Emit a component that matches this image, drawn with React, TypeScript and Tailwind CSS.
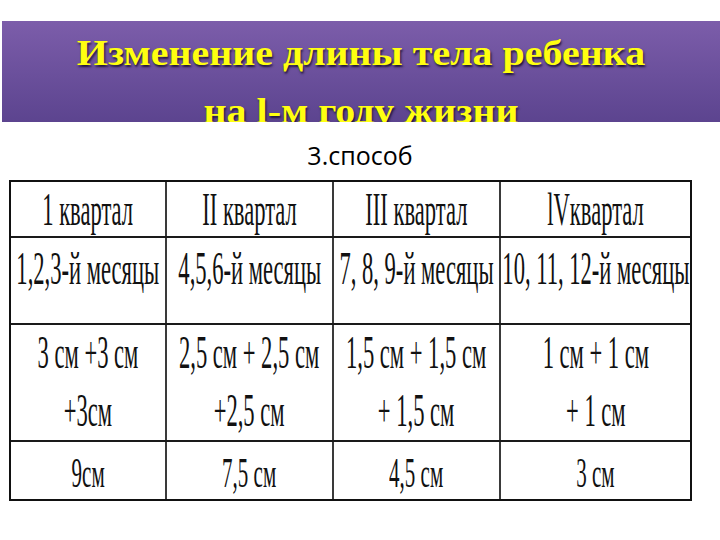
import React from "react";

const serif = "[font-family:'Liberation_Serif','DejaVu_Serif',serif]";

const rows: { h: string; pad: string; size: string; sx: string; cells: string[][] }[] = [
  {
    h: "h-[56px]",
    pad: "",
    size: "text-[47px] leading-[48px]",
    sx: "scale-x-[0.48]",
    cells: [["1 квартал"], ["II квартал"], ["III квартал"], ["lVквартал"]],
  },
  {
    h: "h-[87px]",
    pad: "pb-[25px]",
    size: "text-[47px] leading-[48px]",
    sx: "scale-x-[0.48]",
    cells: [["1,2,3-й месяцы"], ["4,5,6-й месяцы"], ["7, 8, 9-й месяцы"], ["10, 11, 12-й месяцы"]],
  },
  {
    h: "h-[117px]",
    pad: "pb-[3px]",
    size: "text-[47px] leading-[58px]",
    sx: "scale-x-[0.48]",
    cells: [
      ["3 см +3 см", "+3см"],
      ["2,5 см + 2,5 см", "+2,5 см"],
      ["1,5 см + 1,5 см", "+ 1,5 см"],
      ["1 см + 1 см", "+ 1 см"],
    ],
  },
  {
    h: "h-[57px]",
    pad: "pt-[4px]",
    size: "text-[42px] leading-[44px]",
    sx: "scale-x-[0.5]",
    cells: [["9см"], ["7,5 см"], ["4,5 см"], ["3 см"]],
  },
];

const colW = ["w-[156px]", "w-[167px]", "w-[167px]", "w-[189px]"];

const App = () => {
  return (
    <div className="w-[720px] h-[540px] bg-white overflow-hidden">
      <div className="h-[21px]" />

      {/* Title band */}
      <div className="ml-[2px] h-[101px] overflow-hidden bg-gradient-to-b from-[#7c5daa] to-[#5c448f] text-center">
        <h1
          className={`${serif} pt-[3px] text-[36px] leading-[58px] font-bold text-[#ffff10] whitespace-nowrap scale-x-[1.11] [text-shadow:1px_2px_2px_rgba(20,10,40,0.85)]`}
        >
          Изменение длины тела ребенка
          <br />
          на l-м году жизни
        </h1>
      </div>

      <p className="mt-[16px] h-[34px] text-center text-[25px] leading-[34px] text-black [font-family:'Open_Sans','Noto_Sans',sans-serif]">
        3.способ
      </p>

      {/* Table */}
      <div className={`${serif} mt-[8px] ml-[9px] w-[683px] border-2 border-[#111] text-[#111]`}>
        {rows.map((row, ri) => (
          <div
            key={ri}
            className={`flex ${row.h} ${ri < rows.length - 1 ? "border-b-2 border-[#1a1a1a]" : ""}`}
          >
            {row.cells.map((lines, ci) => (
              <div
                key={ci}
                className={`${colW[ci]} ${row.pad} flex items-center justify-center overflow-visible ${
                  ci < 3 ? "border-r-2 border-[#3a3a3a]" : ""
                }`}
              >
                <span className={`inline-block shrink-0 whitespace-nowrap text-center ${row.size} ${row.sx}`}>
                  {lines.map((l, li) => (
                    <span key={li} className="block">
                      {l}
                    </span>
                  ))}
                </span>
              </div>
            ))}
          </div>
        ))}
      </div>
    </div>
  );
};

export default App;
